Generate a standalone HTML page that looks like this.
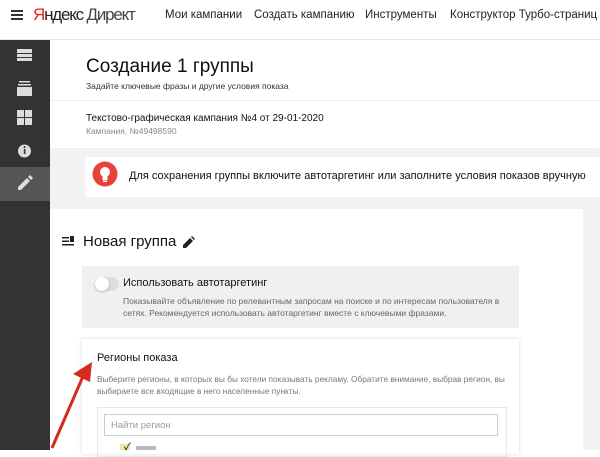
<!DOCTYPE html>
<html><head><meta charset="utf-8"><style>
*{margin:0;padding:0;box-sizing:border-box}
body{width:600px;height:450px;overflow:hidden;background:#fff;font-family:"Liberation Sans","Noto Sans CJK SC",sans-serif;position:relative;color:#000}
.abs{position:absolute}
.hdr{left:0;top:0;width:600px;height:40px;background:#fff;border-bottom:1px solid #e6e6e6}
.nav{top:9px;font-size:11.5px;color:#222}
.side{left:0;top:40px;width:50px;height:410px;background:#333}
.sel{left:0;top:167px;width:50px;height:34px;background:#555}
</style></head><body>
<div class="abs hdr"></div>
<div class="abs" style="left:11px;top:10px;width:12px;height:2px;background:#333;box-shadow:0 4px 0 #333,0 8px 0 #333"></div>
<div class="abs" style="left:33px;top:5px;font-size:17px;letter-spacing:-1.2px;color:#222;white-space:nowrap"><span style="color:#e22">Я</span>ндекс <span style="color:#444">Директ</span></div>
<div class="abs nav" style="left:165px">Мои кампании</div>
<div class="abs nav" style="left:254px">Создать кампанию</div>
<div class="abs nav" style="left:365px">Инструменты</div>
<div class="abs nav" style="left:450px;white-space:nowrap">Конструктор Турбо-страниц</div>
<div class="abs side"></div>
<div class="abs sel"></div>
<svg class="abs" style="left:0;top:40px" width="50" height="165">
<g fill="#ddd">
<rect x="17" y="9" width="15" height="4"/><rect x="17" y="14" width="15" height="3"/><rect x="17" y="18" width="15" height="3"/>
<rect x="19" y="41" width="11" height="1.5"/><rect x="18" y="44" width="13" height="1.5"/><rect x="17" y="47" width="15" height="9"/>
<rect x="17" y="70" width="7" height="7"/><rect x="25" y="70" width="7" height="7"/><rect x="17" y="78" width="7" height="7"/><rect x="25" y="78" width="7" height="7"/>
<circle cx="24.5" cy="111" r="6.5"/>
<path d="M18 150 L18 147 L27 138 L30 141 L21 150 Z M28 137 L30 135 L33 138 L31 140 Z"/>
</g>
<rect x="23.8" y="109" width="1.6" height="5" fill="#333"/><circle cx="24.6" cy="107" r="1" fill="#333"/>
</svg>
<div class="abs" style="left:50px;top:41px;width:550px;height:107px;background:#fff;box-shadow:0 2px 3px rgba(0,0,0,.08)"></div>
<div class="abs" style="left:50px;top:100px;width:550px;height:1px;background:#f0f0f0"></div>
<div class="abs" style="left:86px;top:56px;font-size:19px;color:#111">Создание 1 группы</div>
<div class="abs" style="left:86px;top:81px;font-size:8.5px;color:#333">Задайте ключевые фразы и другие условия показа</div>
<div class="abs" style="left:86px;top:113px;font-size:10px;color:#111">Текстово-графическая кампания №4 от 29-01-2020</div>
<div class="abs" style="left:86px;top:126px;font-size:8.5px;color:#888">Кампания, №49498590</div>
<div class="abs" style="left:50px;top:149px;width:550px;height:60px;background:#f2f2f2"></div>
<div class="abs" style="left:85px;top:157px;width:515px;height:40px;background:#fff;border-radius:4px 0 0 4px"></div>
<svg class="abs" style="left:92px;top:161px" width="26" height="26"><circle cx="13" cy="13" r="12.5" fill="#e8413a"/><circle cx="13" cy="11" r="5" fill="#fff"/><rect x="10.5" y="14" width="5" height="5" fill="#fff"/><rect x="11" y="19.5" width="4" height="1.5" fill="#fff"/></svg>
<div class="abs" style="left:129px;top:170px;font-size:11px;color:#111;white-space:nowrap">Для сохранения группы включите автотаргетинг или заполните условия показов вручную</div>
<div class="abs" style="left:583px;top:209px;width:17px;height:241px;background:#f2f2f2"></div>
<svg class="abs" style="left:62px;top:236px" width="14" height="12" fill="#222"><rect x="0" y="1" width="7" height="1.5"/><rect x="0" y="4.5" width="7" height="1.5"/><rect x="0" y="8" width="12" height="1.5"/><rect x="8" y="0" width="4" height="6"/></svg>
<div class="abs" style="left:83px;top:233px;font-size:15px;color:#111">Новая группа</div>
<svg class="abs" style="left:183px;top:236px" width="12" height="12" fill="#222"><path d="M0 12 L0 9 L7 2 L10 5 L3 12 Z M8 1 L9 0 L12 3 L11 4 Z"/></svg>
<div class="abs" style="left:82px;top:266px;width:437px;height:62px;background:#f0f0f0"></div>
<div class="abs" style="left:95px;top:277px;width:24px;height:14px;border-radius:7px;background:#ddd"></div>
<div class="abs" style="left:95px;top:277px;width:14px;height:14px;border-radius:7px;background:#fff;box-shadow:0 1px 2px rgba(0,0,0,.25)"></div>
<div class="abs" style="left:123px;top:277px;font-size:11px;color:#111">Использовать автотаргетинг</div>
<div class="abs" style="left:123px;top:295px;width:390px;font-size:8.5px;line-height:12px;color:#666">Показывайте объявление по релевантным запросам на поиске и по интересам пользователя в сетях. Рекомендуется использовать автотаргетинг вместе с ключевыми фразами.</div>
<div class="abs" style="left:82px;top:339px;width:437px;height:115px;background:#fff;box-shadow:0 0 4px rgba(0,0,0,.15)"></div>
<div class="abs" style="left:97px;top:352px;font-size:11px;color:#111">Регионы показа</div>
<div class="abs" style="left:97px;top:373px;width:410px;font-size:8.3px;line-height:12px;color:#777">Выберите регионы, в которых вы бы хотели показывать рекламу. Обратите внимание, выбрав регион, вы выбираете все входящие в него населенные пункты.</div>
<div class="abs" style="left:97px;top:407px;width:410px;height:50px;border:1px solid #e8e8e8"></div>
<div class="abs" style="left:104px;top:414px;width:394px;height:22px;border:1px solid #ccc;background:#fff;font-size:9.5px;color:#999;padding:5px 0 0 6px">Найти регион</div>
<div class="abs" style="left:120px;top:444px;width:10px;height:6px;background:#f0e7a0"></div>
<div class="abs" style="left:124px;top:438px;font-size:10px">✓</div>
<div class="abs" style="left:136px;top:446px;width:20px;height:4px;background:#bbb"></div>
<svg class="abs" style="left:40px;top:360px" width="60" height="90"><line x1="12" y1="88" x2="44" y2="14" stroke="#d42a20" stroke-width="3"/><path d="M52 2 L33 14 L50 22 Z" fill="#d42a20"/></svg>
</body></html>
